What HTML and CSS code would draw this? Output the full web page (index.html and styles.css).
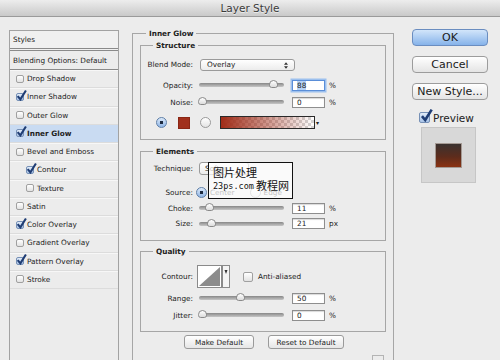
FILE: index.html
```html
<!DOCTYPE html>
<html lang="en">
<head>
    <meta charset="UTF-8">
    <title>Layer Style</title>
    <link rel="stylesheet" href="styles.css">
</head>
<body>

<div class="titlebar">Layer Style</div>

<div class="dialog">
    <div class="styles-panel">
        <div class="panel-head">Styles</div>
        <div class="panel-row blending">Blending Options: Default</div>
        <div class="panel-row"><span class="cb"></span>Drop Shadow</div>
        <div class="panel-row"><span class="cb on"><svg viewBox="0 0 10 10"><path d="M1.5 5.5 L4 8.5 L9 0.5"/></svg></span>Inner Shadow</div>
        <div class="panel-row"><span class="cb"></span>Outer Glow</div>
        <div class="panel-row active"><span class="cb on"><svg viewBox="0 0 10 10"><path d="M1.5 5.5 L4 8.5 L9 0.5"/></svg></span><b>Inner Glow</b></div>
        <div class="panel-row"><span class="cb"></span>Bevel and Emboss</div>
        <div class="panel-row sub"><span class="cb on"><svg viewBox="0 0 10 10"><path d="M1.5 5.5 L4 8.5 L9 0.5"/></svg></span>Contour</div>
        <div class="panel-row sub"><span class="cb"></span>Texture</div>
        <div class="panel-row"><span class="cb"></span>Satin</div>
        <div class="panel-row"><span class="cb on"><svg viewBox="0 0 10 10"><path d="M1.5 5.5 L4 8.5 L9 0.5"/></svg></span>Color Overlay</div>
        <div class="panel-row"><span class="cb"></span>Gradient Overlay</div>
        <div class="panel-row"><span class="cb on"><svg viewBox="0 0 10 10"><path d="M1.5 5.5 L4 8.5 L9 0.5"/></svg></span>Pattern Overlay</div>
        <div class="panel-row"><span class="cb"></span>Stroke</div>
    </div>

    <div class="main">
        <fieldset class="group outer">
            <legend>Inner Glow</legend>

            <fieldset class="group structure">
                <legend>Structure</legend>
                <div class="row blend-row">
                    <span class="lbl">Blend Mode:</span>
                    <span class="select wide">Overlay<svg class="updown" viewBox="0 0 5 8"><path d="M2.5 0 L5 3 L0 3 Z M0 5 L5 5 L2.5 8 Z"/></svg></span>
                </div>
                <div class="row opacity-row">
                    <span class="lbl">Opacity:</span>
                    <span class="slider"><span class="knob" style="left: 87%"></span></span>
                    <span class="num focus"><span class="sel">88</span></span>
                    <span class="unit">%</span>
                </div>
                <div class="row noise-row">
                    <span class="lbl">Noise:</span>
                    <span class="slider"><span class="knob" style="left: 3%"></span></span>
                    <span class="num">0</span>
                    <span class="unit">%</span>
                </div>
                <div class="row color-row">
                    <span class="radio on"></span>
                    <span class="swatch"></span>
                    <span class="radio"></span>
                    <span class="gradient"></span>
                    <span class="gradient-arrow">&#9662;</span>
                </div>
            </fieldset>

            <fieldset class="group elements">
                <legend>Elements</legend>
                <div class="row technique-row">
                    <span class="lbl">Technique:</span>
                    <span class="select">Softer</span>
                    <div class="watermark">
                        <div class="wm-top">图片处理</div>
                        <div class="wm-bottom"><span class="wm-url">23ps.com</span><span class="wm-cn">教程网</span></div>
                    </div>
                </div>
                <div class="row source-row">
                    <span class="lbl">Source:</span>
                    <span class="radio on"></span>
                    <span class="radio-text">Center</span>
                    <span class="radio edge"></span>
                    <span class="radio-text">Edge</span>
                </div>
                <div class="row">
                    <span class="lbl">Choke:</span>
                    <span class="slider"><span class="knob" style="left: 12%"></span></span>
                    <span class="num">11</span>
                    <span class="unit">%</span>
                </div>
                <div class="row size-row">
                    <span class="lbl">Size:</span>
                    <span class="slider"><span class="knob" style="left: 14%"></span></span>
                    <span class="num">21</span>
                    <span class="unit">px</span>
                </div>
            </fieldset>

            <fieldset class="group quality">
                <legend>Quality</legend>
                <div class="row contour-row">
                    <span class="lbl">Contour:</span>
                    <svg class="contour" viewBox="0 0 33 23">
                        <rect x="0.5" y="0.5" width="24" height="22" fill="#fff" stroke="#8a8a8a"/>
                        <path d="M2 21 L23 2 L23 21 Z" fill="#8c8c8c"/>
                        <rect x="25.5" y="0.5" width="7" height="22" fill="#f4f4f4" stroke="#8a8a8a"/>
                        <path d="M27.5 5 L30.5 5 L29 9 Z" fill="#333"/>
                    </svg>
                    <span class="check"></span>
                    <span class="check-text">Anti-aliased</span>
                </div>
                <div class="row range-row">
                    <span class="lbl">Range:</span>
                    <span class="slider"><span class="knob" style="left: 48%"></span></span>
                    <span class="num">50</span>
                    <span class="unit">%</span>
                </div>
                <div class="row jitter-row">
                    <span class="lbl">Jitter:</span>
                    <span class="slider"><span class="knob" style="left: 3%"></span></span>
                    <span class="num">0</span>
                    <span class="unit">%</span>
                </div>
            </fieldset>

            <div class="defaults">
                <button class="small-btn">Make Default</button>
                <button class="small-btn reset">Reset to Default</button>
            </div>
            <div class="corner"><span class="corner-mark"></span></div>
        </fieldset>
    </div>

    <div class="side">
        <button class="btn primary">OK</button>
        <button class="btn">Cancel</button>
        <button class="btn">New Style...</button>
        <div class="preview-row">
            <span class="cb big on"><svg viewBox="0 0 10 10"><path d="M1.5 5.5 L4 8.5 L9 0.5"/></svg></span>
            <span>Preview</span>
        </div>
        <div class="preview-box">
            <div class="preview-swatch"></div>
        </div>
    </div>
</div>

</body>
</html>
```

FILE: styles.css
```css
* {
    box-sizing: border-box;
}

body {
    margin: 0;
    width: 500px;
    height: 360px;
    overflow: hidden;
    background-color: #ececec;
    font-family: "DejaVu Sans", sans-serif;
    font-size: 7.3px;
    color: #222;
}

.titlebar {
    height: 17px;
    line-height: 16px;
    text-align: center;
    font-size: 10.5px;
    color: #3a3a3a;
    text-shadow: 0 1px 0 rgba(255, 255, 255, 0.6);
    background: linear-gradient(#ededed, #c9c9c9);
    border-bottom: 1px solid #9a9a9a;
}

.dialog {
    display: flex;
    align-items: flex-start;
    padding-left: 9px;
}

/* left list of effects */
.styles-panel {
    width: 110px;
    height: 340px;
    margin-top: 13px;
    border: 1px solid #a2a2a2;
    background-color: #ececec;
}

.panel-head {
    height: 20px;
    padding-left: 3px;
    line-height: 17px;
    border-bottom: 3px double #8a8a8a;
    background-color: #f0f0f0;
}

.panel-row {
    display: flex;
    align-items: center;
    height: 18.25px;
    padding-left: 6px;
    border-bottom: 1px solid #dcdcdc;
    box-shadow: inset 0 1px 0 #f7f7f7;
}

.panel-row.blending {
    height: 19px;
    padding-left: 3px;
    border-bottom-color: #8a8a8a;
    box-shadow: none;
}

.panel-row.sub {
    padding-left: 16px;
}

.panel-row.active {
    background-color: #c9dbf2;
    box-shadow: none;
}

.panel-row b {
    font-weight: bold;
}

.cb {
    position: relative;
    flex: none;
    width: 8px;
    height: 8px;
    margin-right: 3px;
    border: 1px solid #a0a0a0;
    border-radius: 2px;
    background: linear-gradient(#fff, #e2e2e2);
}

.cb.on {
    border-color: #7690b6;
    background: linear-gradient(#e2ecf8, #a9c4e8);
}

.cb svg {
    position: absolute;
    left: -1px;
    top: -4px;
    width: 11px;
    height: 11px;
    fill: none;
    stroke: #1f3d74;
    stroke-width: 1.9;
}

/* main settings area */
.main {
    margin-left: 13px;
}

.group {
    margin: 0;
    padding: 0;
    min-width: 0;
    border: 1px solid #a6a6a6;
}

.group legend {
    padding: 0 3px;
    line-height: 11px;
    font-weight: bold;
}

.outer {
    width: 262px;
    margin-top: 11px;
    padding: 0 7px 10px;
}

.outer > legend {
    margin-left: 6px;
}

.structure,
.elements,
.quality {
    width: 246px;
}

.structure > legend,
.elements > legend,
.quality > legend {
    margin-left: 12px;
}

.structure {
    margin-top: 1px;
    padding: 6px 0 7px;
}

.elements {
    margin-top: 6px;
    padding: 4px 0 9px;
}

.quality {
    margin-top: 5px;
    padding: 8px 0 8px;
}

.row {
    display: flex;
    align-items: center;
    height: 16px;
}

.lbl {
    flex: none;
    width: 52px;
    margin-right: 6px;
    text-align: right;
}

.blend-row {
    height: 15px;
}

.opacity-row {
    height: 18px;
    margin-top: 4px;
}

.color-row {
    height: 19px;
    margin-top: 3px;
    padding-left: 15px;
}

.technique-row {
    position: relative;
    height: 15px;
}

.source-row {
    margin-top: 8px;
}

.size-row {
    height: 15px;
}

.contour-row {
    height: 23px;
}

.range-row {
    margin-top: 2px;
}

.jitter-row {
    margin-top: 1px;
}

.select {
    position: relative;
    display: flex;
    align-items: center;
    width: 50px;
    height: 13px;
    padding-left: 5px;
    border: 1px solid #9a9a9a;
    border-radius: 3px;
    background: linear-gradient(#fff, #ececec);
}

.select.wide {
    width: 95px;
    height: 12px;
    margin-left: 1px;
    padding-left: 6px;
}

.updown {
    position: absolute;
    right: 6px;
    top: 2px;
    width: 4px;
    height: 7px;
    fill: #333;
}

.slider {
    position: relative;
    flex: none;
    width: 85px;
    height: 4px;
    margin-right: 8px;
    border-radius: 2px;
    background: linear-gradient(#878787, #c6c6c6);
}

.knob {
    position: absolute;
    top: -3px;
    width: 9px;
    height: 8px;
    margin-left: -4px;
    border: 1px solid #8a8a8a;
    border-radius: 5px 5px 3px 3px;
    background: linear-gradient(#fff, #dcdcdc);
}

.num {
    flex: none;
    width: 33px;
    height: 11px;
    margin-right: 4px;
    padding-left: 4px;
    line-height: 9px;
    border: 1px solid #8e8e8e;
    background-color: #fff;
    box-shadow: inset 0 1px 1px rgba(0, 0, 0, 0.15);
}

.num.focus {
    border-color: #5a8ed8;
    box-shadow: 0 0 0 1.5px #9cc0ee;
}

.sel {
    background-color: #b6d2f5;
}

.radio {
    flex: none;
    width: 11px;
    height: 11px;
    border: 1px solid #9a9a9a;
    border-radius: 50%;
    background: linear-gradient(#fff, #e4e4e4);
}

.radio.on {
    border-color: #5f7fa8;
    background: radial-gradient(circle, #1d2a40 0 1.6px, transparent 2px), linear-gradient(#dce9f8, #8fb5e6);
}

.swatch {
    flex: none;
    width: 12px;
    height: 12px;
    margin: 0 10px 0 11px;
    background-color: #a1301c;
    border: 1px solid #8a2614;
}

.gradient {
    flex: none;
    width: 95px;
    height: 13px;
    margin-left: 9px;
    border: 1px solid #2a2a2a;
    background:
        linear-gradient(to right, rgba(160, 44, 24, 1), rgba(160, 44, 24, 0)),
        repeating-conic-gradient(#d4d4d4 0 25%, #fff 0 50%) 0 0 / 6px 6px;
}

.gradient-arrow {
    font-size: 6px;
    margin-left: 1px;
}

.source-row .radio {
    margin-left: -3px;
}

.source-row .radio.edge {
    margin-left: 15px;
}

.radio-text {
    margin-left: 3px;
}

.watermark {
    position: absolute;
    left: 67px;
    top: 1px;
    width: 85px;
    height: 37px;
    padding: 3px 0 0 4px;
    border: 1px solid #111;
    background-color: rgba(255, 255, 255, 0.72);
    color: #111;
}

.wm-top {
    font-family: "Noto Sans CJK SC", sans-serif;
    font-size: 11px;
    line-height: 13px;
}

.wm-bottom {
    display: flex;
    align-items: flex-end;
    line-height: 11px;
}

.wm-url {
    font-family: "DejaVu Sans Mono", monospace;
    font-size: 8.5px;
}

.wm-cn {
    margin-left: 2px;
    font-family: "Noto Sans CJK SC", sans-serif;
    font-size: 11px;
    line-height: 13px;
}

.contour {
    flex: none;
    width: 33px;
    height: 23px;
    margin-left: -2px;
}

.check {
    flex: none;
    width: 10px;
    height: 10px;
    margin-left: 13px;
    border: 1px solid #a0a0a0;
    border-radius: 2px;
    background: linear-gradient(#fff, #e2e2e2);
}

.check-text {
    margin-left: 5px;
}

.defaults {
    display: flex;
    justify-content: center;
    gap: 14px;
    margin-top: 3px;
    padding-left: 2px;
}

.small-btn {
    width: 70px;
    height: 14px;
    padding: 0;
    font-family: "DejaVu Sans", sans-serif;
    font-size: 7.3px;
    color: #222;
    border: 1px solid #9a9a9a;
    border-radius: 3px;
    background: linear-gradient(#fff, #e6e6e6);
}

.small-btn.reset {
    width: 76px;
}

.corner {
    display: flex;
    justify-content: flex-end;
    margin-top: 6px;
    padding-right: 2px;
}

.corner-mark {
    width: 12px;
    height: 6px;
    border: 1px solid #b4b4b4;
    border-bottom: none;
}

/* right column */
.side {
    display: flex;
    flex-direction: column;
    width: 76px;
    margin-left: 18px;
    margin-top: 12px;
}

.btn {
    height: 17px;
    margin-bottom: 10px;
    padding: 0;
    font-family: "DejaVu Sans", sans-serif;
    font-size: 11px;
    color: #1a1a1a;
    border: 1px solid #9c9c9c;
    border-radius: 4px;
    background: linear-gradient(#fff, #e4e4e4);
}

.btn.primary {
    border-color: #6a8dc0;
    background: linear-gradient(#d2e5fa, #86b3ea);
}

.preview-row {
    display: flex;
    align-items: center;
    height: 11px;
    margin-top: 2px;
    padding-left: 7px;
    font-size: 10.5px;
}

.cb.big {
    width: 11px;
    height: 11px;
    margin-right: 3px;
}

.cb.big svg {
    left: 0;
    top: -4px;
    width: 13px;
    height: 13px;
    stroke-width: 2;
}

.preview-box {
    display: flex;
    align-items: center;
    justify-content: center;
    width: 55px;
    height: 56px;
    margin: 4px 0 0 9px;
    border: 1px solid #c6c6c6;
    background-color: #d8d8d8;
}

.preview-swatch {
    width: 27px;
    height: 25px;
    border: 1px solid #a59a94;
    background: linear-gradient(#3a322f, #5d2c1c 55%, #8a3212);
}
```
